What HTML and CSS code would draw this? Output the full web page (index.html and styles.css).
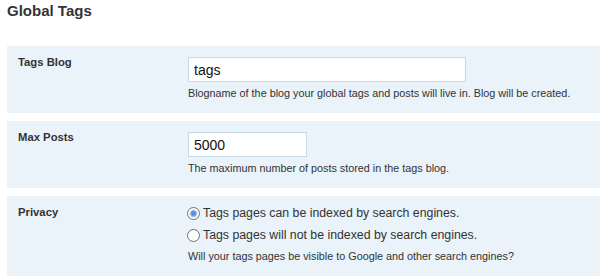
FILE: index.html
```html
<!DOCTYPE html>
<html>
<head>
    <title>Global Tags</title>
    <meta charset="UTF-8">
    <link rel="stylesheet" href="styles.css">
</head>
<body>
    <h2>Global Tags</h2>

    <form id="globalTagsForm">
        <div class="row">
            <label for="tagsBlog">Tags Blog</label>
            <div class="field">
                <input type="text" id="tagsBlog" class="wide" value="tags">
                <div class="help-text">Blogname of the blog your global tags and posts will live in. Blog will be created.</div>
            </div>
        </div>

        <div class="row">
            <label for="maxPosts">Max Posts</label>
            <div class="field">
                <input type="text" id="maxPosts" class="short" value="5000">
                <div class="help-text">The maximum number of posts stored in the tags blog.</div>
            </div>
        </div>

        <div class="row">
            <label>Privacy</label>
            <div class="field">
                <label class="choice"><input type="radio" name="privacy" value="1" checked> Tags pages can be indexed by search engines.</label>
                <label class="choice"><input type="radio" name="privacy" value="0"> Tags pages will not be indexed by search engines.</label>
                <div class="help-text">Will your tags pages be visible to Google and other search engines?</div>
            </div>
        </div>
    </form>
</body>
</html>
```

FILE: styles.css
```css
body {
    font-family: "Liberation Sans", Arial, sans-serif;
    font-size: 10.8px;
    color: #333;
    margin: 0;
    padding: 0 0 0 7px;
    overflow: hidden;
}
h2 {
    font-size: 15px;
    font-weight: bold;
    color: #333;
    margin: 2px 0 26px;
    line-height: 18px;
}
.row {
    display: grid;
    grid-template-columns: 170px 1fr;
    background-color: #eaf2fa;
    padding: 9px 11px 13px;
    margin-bottom: 8px;
}
.row > label {
    font-weight: bold;
    font-size: 11.3px;
    line-height: 14px;
}
.field input[type=text] {
    font-family: "Liberation Sans", Arial, sans-serif;
    font-size: 14px;
    color: #111;
    border: 1px solid #c6d9e9;
    background: #fff;
    padding: 2px 5px;
    height: 25px;
    box-sizing: border-box;
    margin: 2px 0 0;
    display: block;
}
.wide {
    width: 278px;
}
.short {
    width: 119px;
}
.help-text {
    margin-top: 4px;
    line-height: 14px;
}
.choice {
    display: flex;
    align-items: center;
    font-size: 12.3px;
    line-height: 16px;
    margin: 0 0 6px;
}
.choice input {
    appearance: none;
    -webkit-appearance: none;
    margin: 0 3px 0 -1px;
    width: 13px;
    height: 13px;
    border: 1px solid #6f6f6f;
    border-radius: 50%;
    background: #fff;
    box-sizing: border-box;
}
.choice input:checked {
    background: radial-gradient(circle, #4f86d6 0, #6d9de0 2.5px, #c9dbf2 3.5px, #fff 4.5px);
}
```
